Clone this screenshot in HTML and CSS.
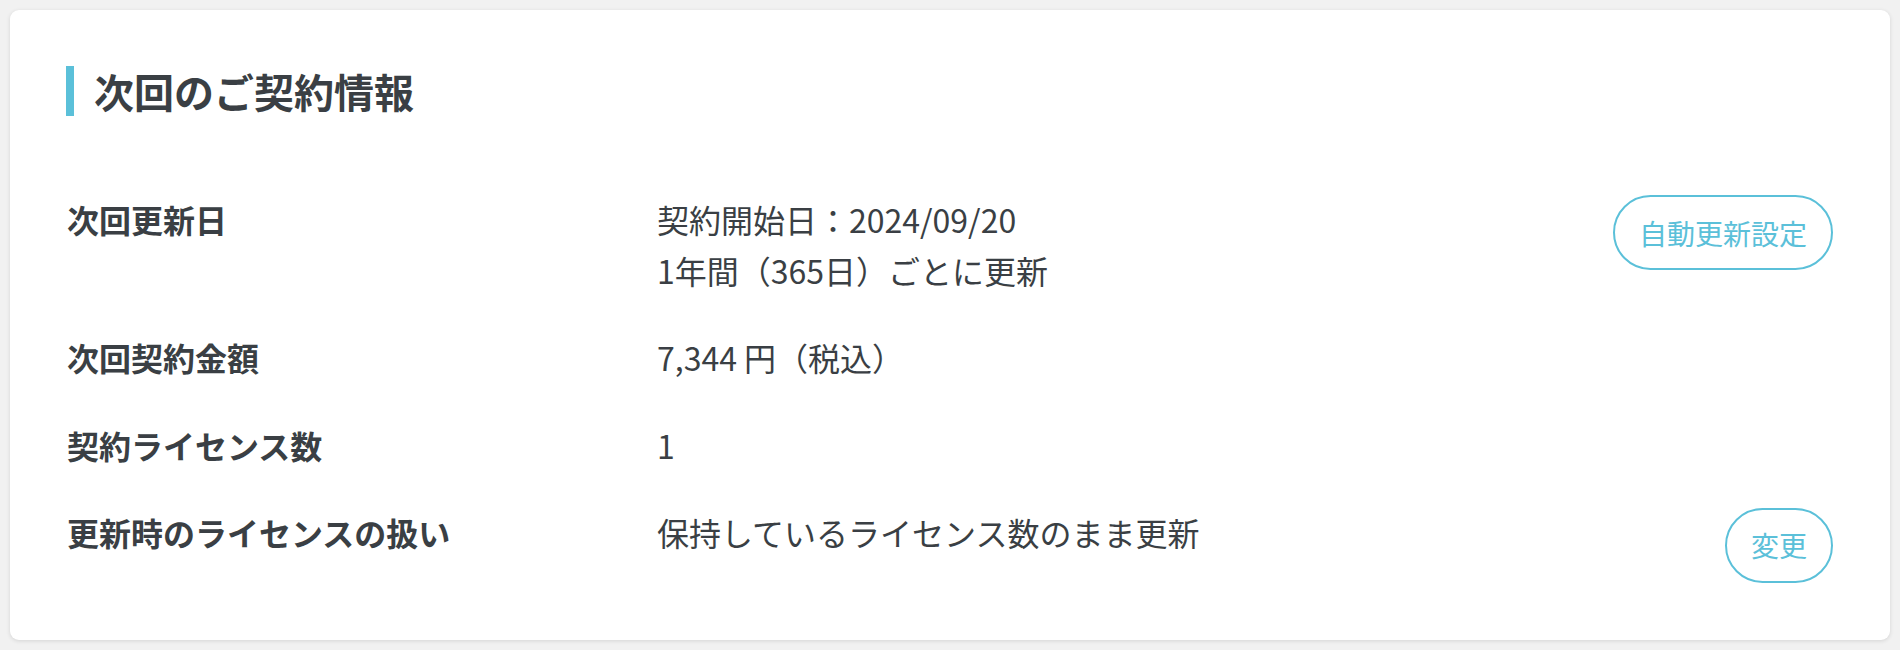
FILE: index.html
```html
<!DOCTYPE html>
<html lang="ja">
<head>
<meta charset="utf-8">
<title>次回のご契約情報</title>
<link rel="stylesheet" href="styles.css">
</head>
<body>
<section class="card">
  <h2 class="title">次回のご契約情報</h2>
  <div class="rows">
    <div class="row">
      <div class="label">次回更新日</div>
      <div class="value">契約開始日：2024/09/20<br>1年間（365日）ごとに更新</div>
      <button class="btn" type="button">自動更新設定</button>
    </div>
    <div class="row">
      <div class="label">次回契約金額</div>
      <div class="value">7,344 円（税込）</div>
    </div>
    <div class="row">
      <div class="label">契約ライセンス数</div>
      <div class="value">1</div>
    </div>
    <div class="row">
      <div class="label">更新時のライセンスの扱い</div>
      <div class="value">保持しているライセンス数のまま更新</div>
      <button class="btn" type="button">変更</button>
    </div>
  </div>
</section>
</body>
</html>
```

FILE: styles.css
```css
html, body {
  margin: 0;
  padding: 0;
}
body {
  background: #f1f1f1;
  padding: 10px;
  font-family: "Noto Sans CJK JP", "Noto Sans", sans-serif;
  color: #3a3f44;
}
.card {
  background: #ffffff;
  border-radius: 9px;
  box-shadow: 0 1px 4px rgba(0, 0, 0, 0.12);
  padding: 56px 57px 57px 56px;
}
.title {
  margin: 0 0 78px 0;
  border-left: 8px solid #5bc0d9;
  padding-left: 20px;
  font-size: 40px;
  line-height: 50px;
  font-weight: 700;
  color: #3a3f44;
}
.rows {
  display: flex;
  flex-direction: column;
  gap: 36px;
  padding-left: 1px;
}
.row {
  display: grid;
  grid-template-columns: 590px 1fr auto;
  align-items: start;
}
.label {
  font-size: 32px;
  line-height: 51.2px;
  font-weight: 700;
}
.value {
  font-size: 32px;
  line-height: 51.2px;
  font-weight: 400;
}
.btn {
  height: 75px;
  margin-top: 1px;
  padding: 0 24px;
  border: 2px solid #5bc0d9;
  border-radius: 40px;
  background: #ffffff;
  color: #5bc0d9;
  font-family: "Noto Sans CJK JP", "Noto Sans", sans-serif;
  font-size: 28px;
  font-weight: 400;
  line-height: 1;
}
```
